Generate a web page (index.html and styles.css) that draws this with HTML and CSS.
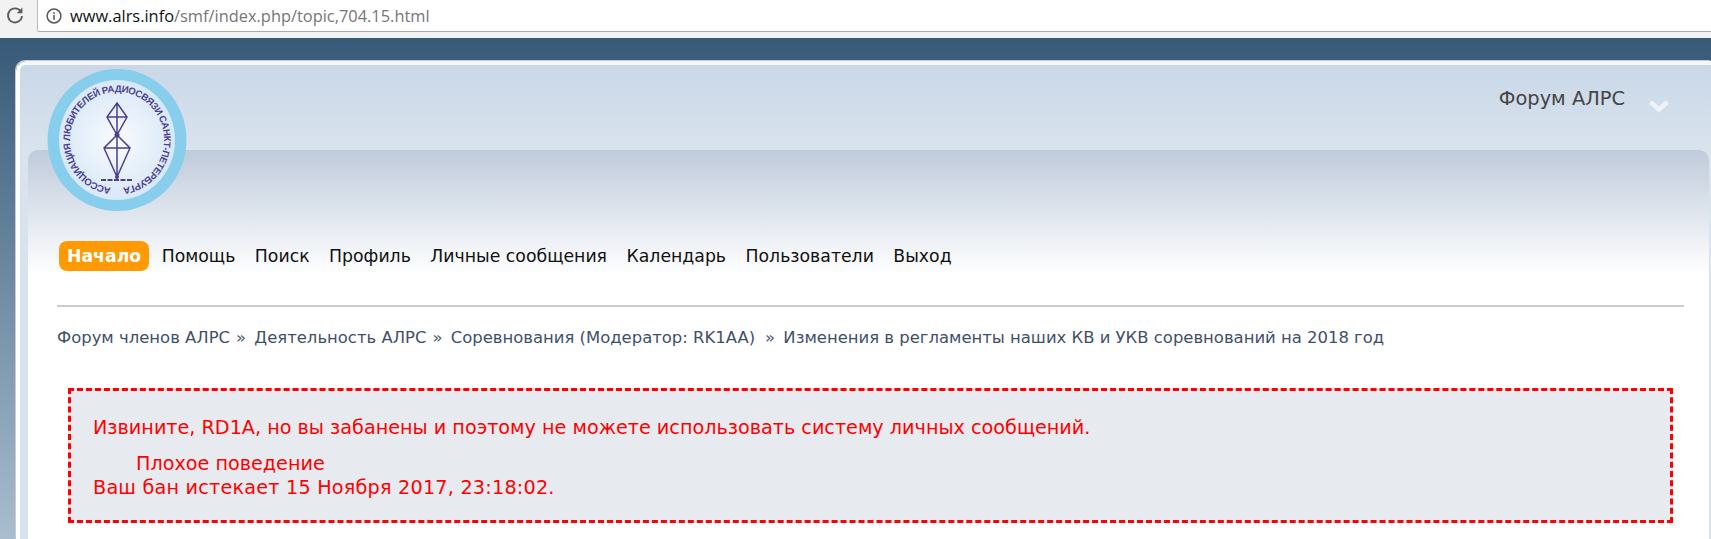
FILE: index.html
```html
<!DOCTYPE html>
<html lang="ru">
<head>
  <title>Изменения в регламенты</title>
  <link rel="stylesheet" href="styles.css">
</head>
<body>
  <div class="browserbar">
    <svg class="reload" viewBox="0 0 20 20" width="20" height="20">
      <path d="M15.6 6.2A7 7 0 1 0 17 11" fill="none" stroke="#5a5a5a" stroke-width="1.8"/>
      <path d="M17.4 2.6v5.6h-5.6z" fill="#5a5a5a"/>
    </svg>
    <div class="address">
      <svg class="info" viewBox="0 0 18 18" width="18" height="18">
        <circle cx="9" cy="9" r="6.9" fill="none" stroke="#5a5a5a" stroke-width="1.5"/>
        <rect x="8.2" y="8" width="1.6" height="4.8" fill="#5a5a5a"/>
        <rect x="8.2" y="5.2" width="1.6" height="1.7" fill="#5a5a5a"/>
      </svg>
      <span class="host">www.alrs.info</span><span class="path">/smf/index.php/topic,704.15.html</span>
    </div>
  </div>

  <div class="wrapper">
    <svg class="logo" viewBox="0 0 140 142" width="140" height="142">
      <defs>
        <radialGradient id="disc">
          <stop offset="0" stop-color="#f9fbfd"/>
          <stop offset="1" stop-color="#d8e8f7"/>
        </radialGradient>
        <path id="ring" d="M64 118.6A47 48 0 1 1 76 118.6"/>
      </defs>
      <ellipse cx="70" cy="71" rx="69.5" ry="71" fill="#86ceec"/>
      <ellipse cx="70" cy="71" rx="58" ry="60" fill="url(#disc)"/>
      <text class="logo-text"><textPath href="#ring" textLength="286">АССОЦИАЦИЯ ЛЮБИТЕЛЕЙ РАДИОСВЯЗИ САНКТ-ПЕТЕРБУРГА</textPath></text>
      <g fill="none" stroke="#4b3f8f" stroke-width="1.5">
        <path d="M70 34L80 48L70 66L60 48ZM60 48H80M70 34V66"/>
        <path d="M70 66L83 79L70 108L57 79ZM57 79H83M70 66V108"/>
        <path d="M54 111H85" stroke-width="2" stroke-dasharray="5 1.5"/>
      </g>
      <circle cx="70" cy="66" r="2.5" fill="#4b3f8f"/>
      <circle cx="70" cy="108" r="2" fill="#4b3f8f"/>
    </svg>

    <div class="topline">
      <span class="forum-name">Форум АЛРС</span>
      <svg class="chevron" viewBox="0 0 22 16" width="22" height="16">
        <path d="M2.5 4L11 11.5L19.5 4" fill="none" stroke="#eef1f7" stroke-width="4.5"/>
      </svg>
    </div>

    <div class="inner">
      <ul class="menu">
        <li class="active">Начало</li>
        <li>Помощь</li>
        <li>Поиск</li>
        <li>Профиль</li>
        <li>Личные сообщения</li>
        <li>Календарь</li>
        <li>Пользователи</li>
        <li>Выход</li>
      </ul>
      <div class="crumbs">
        <span>Форум членов АЛРС</span><i>»</i>
        <span>Деятельность АЛРС</span><i>»</i>
        <span class="board">Соревнования (Модератор: RK1AA)</span><i>»</i>
        <span>Изменения в регламенты наших КВ и УКВ соревнований на 2018 год</span>
      </div>
      <div class="ban">
        <p class="ban-title">Извините, RD1A, но вы забанены и поэтому не можете использовать систему личных сообщений.</p>
        <p class="ban-reason">Плохое поведение</p>
        <p class="ban-expires">Ваш бан истекает 15 Ноября 2017, 23:18:02.</p>
      </div>
    </div>
  </div>
</body>
</html>
```

FILE: styles.css
```css
html, body {
  margin: 0;
  padding: 0;
  height: 539px;
  overflow: hidden;
}

body {
  display: flex;
  flex-direction: column;
  font-family: "DejaVu Sans", Verdana, sans-serif;
  background: linear-gradient(#375a78 38px, #a9bdce 100%);
}

.browserbar {
  display: flex;
  height: 38px;
  flex: none;
  background: #f2f2f2;
  box-sizing: border-box;
  padding-bottom: 6px;
}

.reload {
  margin: 5px 12px 0 5px;
}

.address {
  flex: 1;
  display: flex;
  align-items: center;
  background: #fff;
  border-left: 1px solid #bbb;
  border-bottom: 1px solid #aaa;
  border-bottom-left-radius: 2px;
  padding-left: 7px;
  font-family: "Open Sans", sans-serif;
  font-size: 16.4px;
}

.info {
  margin-right: 7px;
}

.host {
  color: #111;
}

.path {
  color: #767676;
}

.wrapper {
  position: relative;
  flex: 1;
  margin: 23px 0 0 16px;
  border: solid #fff;
  border-width: 4px 0 0 4px;
  border-top-color: #f4f6f9;
  border-top-left-radius: 10px;
  background: linear-gradient(#c9d7e7, #d9e3ee 85px, #d9e3ee);
  box-shadow: -1px -1px 0 #c8ccd2;
  display: flex;
  flex-direction: column;
}

.logo {
  position: absolute;
  left: 27px;
  top: 4px;
}

.logo-text {
  font-family: "Liberation Sans", sans-serif;
  font-size: 9.6px;
  font-weight: bold;
  fill: #4b3f8f;
}

.topline {
  height: 85px;
  flex: none;
  display: flex;
  justify-content: flex-end;
  box-sizing: border-box;
  padding: 22px 41px 0 0;
}

.forum-name {
  font-size: 19.4px;
  line-height: 24px;
  color: #444;
}

.chevron {
  margin: 11px 0 0 23px;
}

.inner {
  flex: 1;
  margin: 0 2px 0 8px;
  padding: 91px 25px 0 29px;
  border-radius: 10px 10px 0 0;
  background: linear-gradient(#bfcbdb, #fff 125px);
}

.menu {
  display: flex;
  gap: 19.5px;
  margin: 0;
  padding: 0 0 0 2px;
  height: 66px;
  list-style: none;
  border-bottom: 2px solid #ccc;
  box-sizing: border-box;
  align-items: flex-start;
  font-size: 17.3px;
  color: #111;
}

.menu li {
  line-height: 30px;
}

.menu .active {
  background: #ff9a03;
  color: #fff;
  font-weight: bold;
  border-radius: 8px;
  padding: 0 8px;
  margin-right: -7px;
}

.crumbs {
  margin-top: 22px;
  font-size: 16.46px;
  line-height: 18px;
  color: #3f5068;
  white-space: nowrap;
}

.crumbs i {
  font-style: normal;
  margin: 0 3px 0 6px;
}

.crumbs .board {
  padding-right: 4px;
}

.ban {
  margin: 41px 11px 0 11px;
  height: 135px;
  box-sizing: border-box;
  border: 3px dashed #f00;
  background: #e7eaef;
  padding: 25px 22px;
  color: #f00;
  font-size: 19.2px;
  line-height: 24px;
}

.ban p {
  margin: 0;
}

.ban .ban-title {
  margin-bottom: 12px;
}

.ban .ban-reason {
  padding-left: 43px;
}

.ban .ban-expires {
  letter-spacing: 0.22px;
}
```
